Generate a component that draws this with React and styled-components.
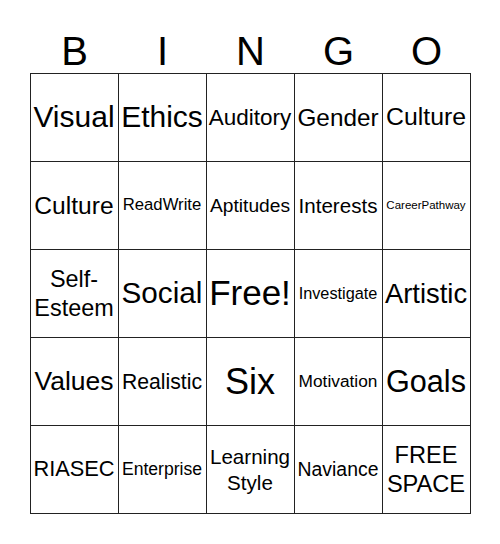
import React from "react";
import styled, { createGlobalStyle } from "styled-components";

const GlobalStyle = createGlobalStyle`
  html, body {
    margin: 0;
    padding: 0;
    background: #ffffff;
  }
  body {
    font-family: "Liberation Sans", Arial, sans-serif;
    color: #000000;
  }
`;

const Page = styled.div`
  width: 500px;
  height: 544px;
  display: flex;
  flex-direction: column;
  align-items: center;
  padding-top: 29px;
  box-sizing: border-box;
`;

const Header = styled.div`
  display: grid;
  grid-template-columns: repeat(5, 88px);
  padding-left: 1px;
  height: 44px;
`;

const Letter = styled.div`
  text-align: center;
  font-size: 40px;
  line-height: 44px;
`;

const Board = styled.div`
  display: grid;
  grid-template-columns: repeat(5, 88px);
  grid-auto-rows: 88px;
  border-top: 1px solid #222;
  border-left: 1px solid #222;
`;

const Cell = styled.div`
  display: flex;
  align-items: center;
  justify-content: center;
  text-align: center;
  box-sizing: border-box;
  border-right: 1px solid #222;
  border-bottom: 1px solid #222;
  font-size: ${(p) => p.$size}px;
  line-height: 1.22;
  white-space: nowrap;
`;

const letters = ["B", "I", "N", "G", "O"];

const cells = [
  ["Visual", 30],
  ["Ethics", 30],
  ["Auditory", 22.5],
  ["Gender", 24.3],
  ["Culture", 24.8],
  ["Culture", 24.6],
  ["ReadWrite", 16.7],
  ["Aptitudes", 19.2],
  ["Interests", 20.6],
  ["CareerPathway", 11.5],
  [["Self-", "Esteem"], 23.4],
  ["Social", 29.7],
  ["Free!", 35],
  ["Investigate", 16.3],
  ["Artistic", 27.4],
  ["Values", 26.5],
  ["Realistic", 21.2],
  ["Six", 36],
  ["Motivation", 17.3],
  ["Goals", 30.6],
  ["RIASEC", 21.8],
  ["Enterprise", 17.6],
  [["Learning", "Style"], 20.6],
  ["Naviance", 19.4],
  [["FREE", "SPACE"], 23.6],
];

const App = () => {
  return (
    <Page>
      <GlobalStyle />
      <Header>
        {letters.map((l) => (
          <Letter key={l}>{l}</Letter>
        ))}
      </Header>
      <Board>
        {cells.map(([text, size], i) => (
          <Cell key={i} $size={size}>
            {Array.isArray(text) ? (
              <span>
                {text[0]}
                <br />
                {text[1]}
              </span>
            ) : (
              text
            )}
          </Cell>
        ))}
      </Board>
    </Page>
  );
};

export default App;
